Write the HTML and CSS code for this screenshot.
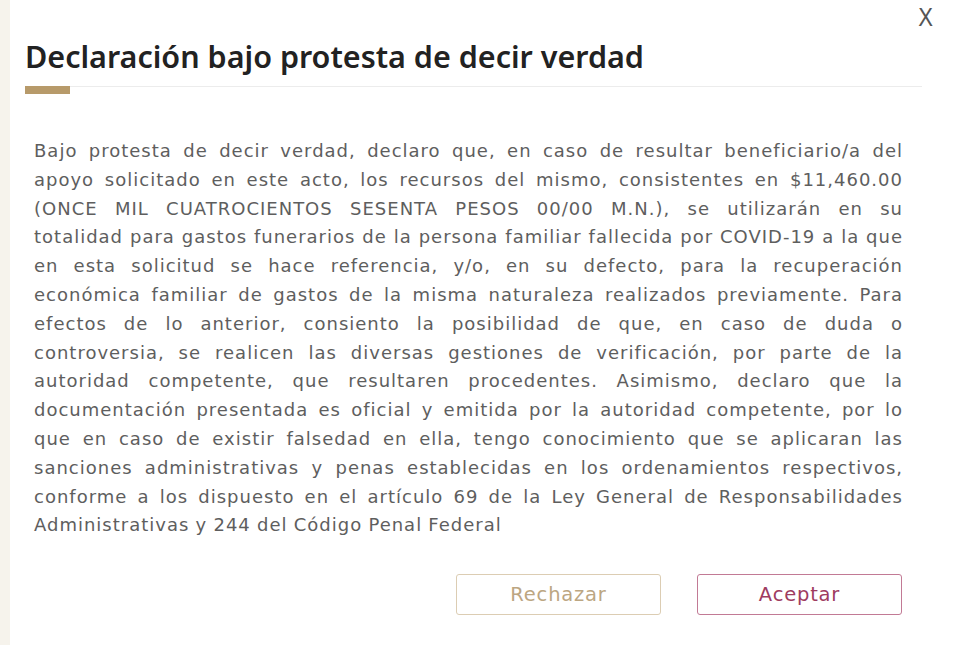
FILE: index.html
```html
<!DOCTYPE html>
<html lang="es">
<head>
<meta charset="utf-8">
<title>Declaración bajo protesta de decir verdad</title>
<link rel="stylesheet" href="styles.css">
</head>
<body>
<div class="page">
  <div class="strip"></div>
  <div class="modal">
    <button class="close" type="button" aria-label="Cerrar">X</button>
    <h1 class="title">Declaración bajo protesta de decir verdad</h1>
    <div class="rule"><span class="accent"></span></div>
    <div class="text">
      <span class="ln">Bajo protesta de decir verdad, declaro que, en caso de resultar beneficiario/a del</span>
      <span class="ln">apoyo solicitado en este acto, los recursos del mismo, consistentes en $11,460.00</span>
      <span class="ln">(ONCE MIL CUATROCIENTOS SESENTA PESOS 00/00 M.N.), se utilizarán en su</span>
      <span class="ln">totalidad para gastos funerarios de la persona familiar fallecida por COVID-19 a la que</span>
      <span class="ln">en esta solicitud se hace referencia, y/o, en su defecto, para la recuperación</span>
      <span class="ln">económica familiar de gastos de la misma naturaleza realizados previamente. Para</span>
      <span class="ln">efectos de lo anterior, consiento la posibilidad de que, en caso de duda o</span>
      <span class="ln">controversia, se realicen las diversas gestiones de verificación, por parte de la</span>
      <span class="ln">autoridad competente, que resultaren procedentes. Asimismo, declaro que la</span>
      <span class="ln">documentación presentada es oficial y emitida por la autoridad competente, por lo</span>
      <span class="ln">que en caso de existir falsedad en ella, tengo conocimiento que se aplicaran las</span>
      <span class="ln">sanciones administrativas y penas establecidas en los ordenamientos respectivos,</span>
      <span class="ln">conforme a los dispuesto en el artículo 69 de la Ley General de Responsabilidades</span>
      <span class="ln last">Administrativas y 244 del Código Penal Federal</span>
    </div>
    <div class="actions">
      <button class="btn btn-reject" type="button">Rechazar</button>
      <button class="btn btn-accept" type="button">Aceptar</button>
    </div>
  </div>
</div>
</body>
</html>
```

FILE: styles.css
```css
html, body {
  margin: 0;
  padding: 0;
  background: #ffffff;
}

.page {
  display: flex;
  width: 968px;
  height: 645px;
  overflow: hidden;
}

.strip {
  width: 10px;
  flex: none;
  background: #f6f3ec;
}

.modal {
  position: relative;
  flex: 1;
  display: flex;
  flex-direction: column;
  padding: 0 0 0 15px;
  font-family: "DejaVu Sans", Verdana, sans-serif;
}

.close {
  position: absolute;
  top: 2px;
  right: 34px;
  border: 0;
  background: transparent;
  padding: 0;
  font-family: "Liberation Sans", Arial, sans-serif;
  font-size: 26px;
  color: #555555;
  cursor: pointer;
  transform: scaleX(0.85);
}

.title {
  margin: 36px 0 0 0;
  font-family: "Noto Sans", sans-serif;
  font-weight: 600;
  font-size: 30.5px;
  line-height: 40px;
  color: #222222;
  letter-spacing: 0;
}

.rule {
  margin-top: 10px;
  width: 897px;
  border-top: 1px solid #ececec;
  height: 8px;
}

.accent {
  display: block;
  width: 45px;
  height: 8px;
  margin-top: -1px;
  background: #b79a6a;
}

.text {
  margin: 42px 0 0 9px;
  width: 869px;
  font-size: 18px;
  letter-spacing: 1px;
  word-spacing: -0.5px;
  line-height: 28.8px;
  color: #5e5e5e;
}

.ln {
  display: block;
  text-align: justify;
  text-align-last: justify;
  white-space: nowrap;
}

.ln.last {
  text-align-last: left;
}

.actions {
  display: flex;
  gap: 36px;
  margin: 34px 0 0 431px;
}

.btn {
  width: 205px;
  height: 41px;
  background: #ffffff;
  border-radius: 3px;
  font-family: "DejaVu Sans", Verdana, sans-serif;
  font-size: 19.5px;
  letter-spacing: 0.8px;
  cursor: pointer;
}

.btn-reject {
  border: 1.5px solid #dccdb3;
  color: #bca682;
}

.btn-accept {
  border: 1.5px solid #c27a95;
  color: #9e3b60;
}
```
